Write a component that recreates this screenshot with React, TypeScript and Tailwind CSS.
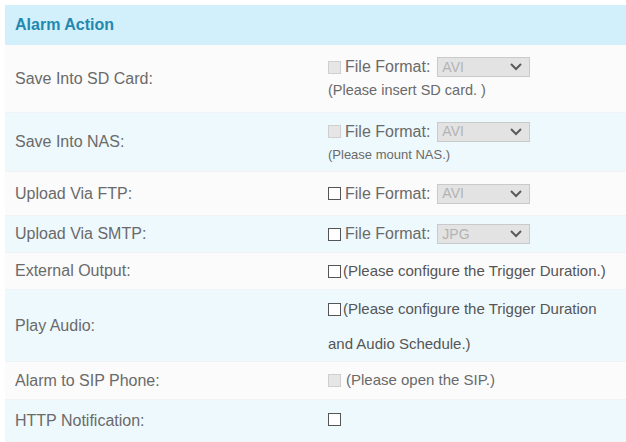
import React from "react";

const Check = ({ disabled = false }: { disabled?: boolean }) => (
  <span
    className={
      disabled
        ? "inline-block w-[13px] h-[13px] shrink-0 border border-[#cfcfcf] bg-[#e6e6e6]"
        : "inline-block w-[13px] h-[13px] shrink-0 border border-[#555] bg-white"
    }
  />
);

const Select = ({ value }: { value: string }) => (
  <span className="ml-[7px] inline-flex w-[93px] h-[20px] items-center justify-between border border-[#cacaca] bg-[#e3e3e3] pl-[4px] pr-[7px]">
    <span className="text-[14px] text-[#b3b3b3]">{value}</span>
    <svg width="12" height="8" viewBox="0 0 12 8">
      <polyline points="1,1 6,6 11,1" fill="none" stroke="#5a5a5a" strokeWidth="2" />
    </svg>
  </span>
);

const FileFormat = ({ value, disabled = false }: { value: string; disabled?: boolean }) => (
  <div className="flex items-center">
    <Check disabled={disabled} />
    <span className="ml-[4px] text-[16px] text-[#6a6a6a]">File Format:</span>
    <Select value={value} />
  </div>
);

const Row = ({
  label,
  className,
  children,
}: {
  label: string;
  className: string;
  children: React.ReactNode;
}) => (
  <div className={`flex items-center border-b border-[#f0f3f5] ${className}`}>
    <div className="w-[323px] shrink-0 pl-[10px] text-[16px] text-[#6a6a6a]">{label}</div>
    <div className="flex-1">{children}</div>
  </div>
);

export default function App() {
  return (
    <div className="w-[626px] h-[442px] overflow-hidden bg-white pt-[5px] pl-[5px] font-['Liberation_Sans',Arial,sans-serif]">
      <div className="flex h-[40px] items-center bg-[#d1f0fb] pl-[10px] text-[16px] font-bold text-[#2388b0]">
        Alarm Action
      </div>

      <Row label="Save Into SD Card:" className="h-[68px] bg-[#fbfbfb]">
        <div className="flex flex-col gap-[1px]">
          <FileFormat value="AVI" disabled />
          <span className="text-[14.5px] text-[#6a6a6a]">(Please insert SD card. )</span>
        </div>
      </Row>

      <Row label="Save Into NAS:" className="h-[59px] bg-[#eef9fd]">
        <div className="flex flex-col gap-[1px]">
          <FileFormat value="AVI" disabled />
          <span className="text-[13px] text-[#6a6a6a]">(Please mount NAS.)</span>
        </div>
      </Row>

      <Row label="Upload Via FTP:" className="h-[44px] bg-[#fbfbfb]">
        <FileFormat value="AVI" />
      </Row>

      <Row label="Upload Via SMTP:" className="h-[37px] bg-[#eef9fd]">
        <FileFormat value="JPG" />
      </Row>

      <Row label="External Output:" className="h-[37px] bg-[#fbfbfb]">
        <div className="flex items-center">
          <Check />
          <span className="ml-[2px] text-[15px] text-[#555]">(Please configure the Trigger Duration.)</span>
        </div>
      </Row>

      <Row label="Play Audio:" className="h-[72px] bg-[#eef9fd]">
        <div className="flex flex-col gap-[14px]">
          <div className="flex items-center">
            <Check />
            <span className="ml-[2px] text-[15px] text-[#555]">(Please configure the Trigger Duration</span>
          </div>
          <span className="text-[15px] leading-[18px] text-[#555]">and Audio Schedule.)</span>
        </div>
      </Row>

      <Row label="Alarm to SIP Phone:" className="h-[38px] bg-[#fbfbfb]">
        <div className="flex items-center">
          <Check disabled />
          <span className="ml-[5px] text-[15px] text-[#6a6a6a]">(Please open the SIP.)</span>
        </div>
      </Row>

      <Row label="HTTP Notification:" className="h-[42px] bg-[#eef9fd]">
        <Check />
      </Row>
    </div>
  );
}
